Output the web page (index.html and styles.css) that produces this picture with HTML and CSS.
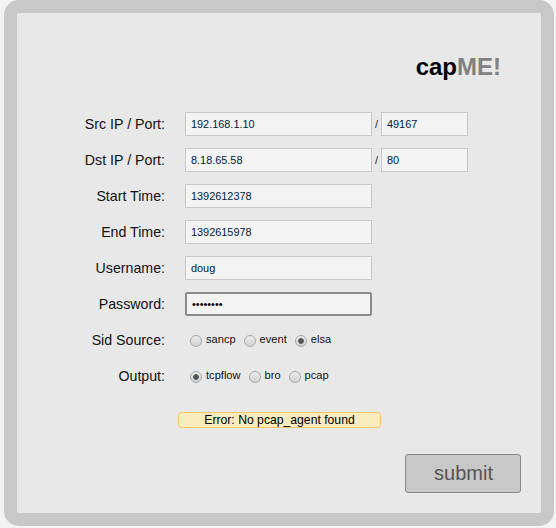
FILE: index.html
```html
<!DOCTYPE html>
<html lang="en">
<head>
<meta charset="utf-8">
<title>capME!</title>
<link rel="stylesheet" href="styles.css">
</head>
<body>
<form class="panel" onsubmit="return false">
  <h1 class="logo">cap<span class="logo-me">ME!</span></h1>
  <div class="fields">
    <div class="row">
      <label class="label">Src IP / Port:</label>
      <input class="field" type="text" value="192.168.1.10">
      <span class="slash">/</span>
      <input class="field field-port" type="text" value="49167">
    </div>
    <div class="row">
      <label class="label">Dst IP / Port:</label>
      <input class="field" type="text" value="8.18.65.58">
      <span class="slash">/</span>
      <input class="field field-port" type="text" value="80">
    </div>
    <div class="row">
      <label class="label">Start Time:</label>
      <input class="field" type="text" value="1392612378">
    </div>
    <div class="row">
      <label class="label">End Time:</label>
      <input class="field" type="text" value="1392615978">
    </div>
    <div class="row">
      <label class="label">Username:</label>
      <input class="field" type="text" value="doug">
    </div>
    <div class="row">
      <label class="label">Password:</label>
      <input class="field field-focus" type="password" value="password">
    </div>
    <div class="row">
      <label class="label">Sid Source:</label>
      <div class="radios">
        <label class="radio"><input class="radio-dot" type="radio" name="sid"><span>sancp</span></label>
        <label class="radio"><input class="radio-dot" type="radio" name="sid"><span>event</span></label>
        <label class="radio"><input class="radio-dot" type="radio" name="sid" checked><span>elsa</span></label>
      </div>
    </div>
    <div class="row">
      <label class="label">Output:</label>
      <div class="radios">
        <label class="radio"><input class="radio-dot" type="radio" name="out" checked><span>tcpflow</span></label>
        <label class="radio"><input class="radio-dot" type="radio" name="out"><span>bro</span></label>
        <label class="radio"><input class="radio-dot" type="radio" name="out"><span>pcap</span></label>
      </div>
    </div>
  </div>
  <div class="error">Error: No pcap_agent found</div>
  <div class="actions"><button class="submit" type="submit">submit</button></div>
</form>
</body>
</html>
```
FILE: styles.css
```css
* { box-sizing: border-box; }
html, body { margin: 0; padding: 0; }
body {
  background: #f3f3f3;
  font-family: "Liberation Sans", Arial, sans-serif;
  color: #000;
  height: 528px;
  overflow: hidden;
}
.panel {
  display: block;
  margin-left: 4px;
  width: 550px;
  height: 526px;
  background: #e8e8e8;
  border: 13px solid #c8c8c8;
  border-radius: 15px;
  padding-top: 39px;
}
.logo {
  margin: 0;
  padding-right: 40px;
  height: 30px;
  line-height: 30px;
  font-size: 24px;
  font-weight: bold;
  text-align: right;
}
.logo-me { color: #808080; }
.fields {
  margin-top: 30px;
  display: flex;
  flex-direction: column;
  gap: 12px;
}
.row {
  display: flex;
  align-items: center;
  height: 24px;
}
.label {
  width: 148px;
  margin-right: 20px;
  text-align: right;
  font-size: 14.2px;
  color: #111;
}
.field {
  width: 187px;
  height: 24px;
  margin: 0;
  padding: 0 4px 0 5px;
  background: #f4f4f4;
  border: 1px solid #c8c8c8;
  border-radius: 0;
  outline: none;
  font-family: "Liberation Sans", Arial, sans-serif;
  font-size: 10.9px;
  color: #001a40;
}
.field-port { width: 87px; }
.field-focus {
  border: 2px solid #8a8a8a;
  border-radius: 2px;
  padding: 0 3px 0 5px;
  color: #000;
}
.slash {
  width: 9px;
  text-align: center;
  font-size: 11px;
  color: #222;
}
.radios {
  display: flex;
  align-items: center;
  gap: 8px;
  padding-left: 5px;
}
.radio {
  display: flex;
  align-items: center;
  gap: 4px;
  font-size: 11.1px;
  color: #111;
}
.radio span { position: relative; top: -1px; }
.radio-dot {
  appearance: none;
  -webkit-appearance: none;
  width: 12px;
  height: 12px;
  margin: 1px 0 -1px;
  border: 1px solid #a8a8a8;
  border-radius: 50%;
  background: linear-gradient(#ececec, #d2d2d2);
}
.radio-dot:checked {
  background: radial-gradient(circle, #555 0, #555 2.5px, transparent 3.2px), linear-gradient(#ececec, #d2d2d2);
}
.error {
  margin: 24px 0 0 161px;
  width: 203px;
  height: 16px;
  line-height: 14px;
  background: #f9ecbc;
  border: 1px solid #f5c76b;
  border-radius: 3px;
  font-size: 12.2px;
  text-align: center;
  color: #000;
}
.actions {
  display: flex;
  justify-content: flex-end;
  margin-top: 26px;
  padding-right: 20px;
}
.submit {
  width: 116px;
  height: 39px;
  padding: 0 0 0 1px;
  background: #c8c8c8;
  border: 1px solid #888;
  border-radius: 3px;
  font-family: "Liberation Sans", Arial, sans-serif;
  font-size: 20px;
  color: #555;
}
```
